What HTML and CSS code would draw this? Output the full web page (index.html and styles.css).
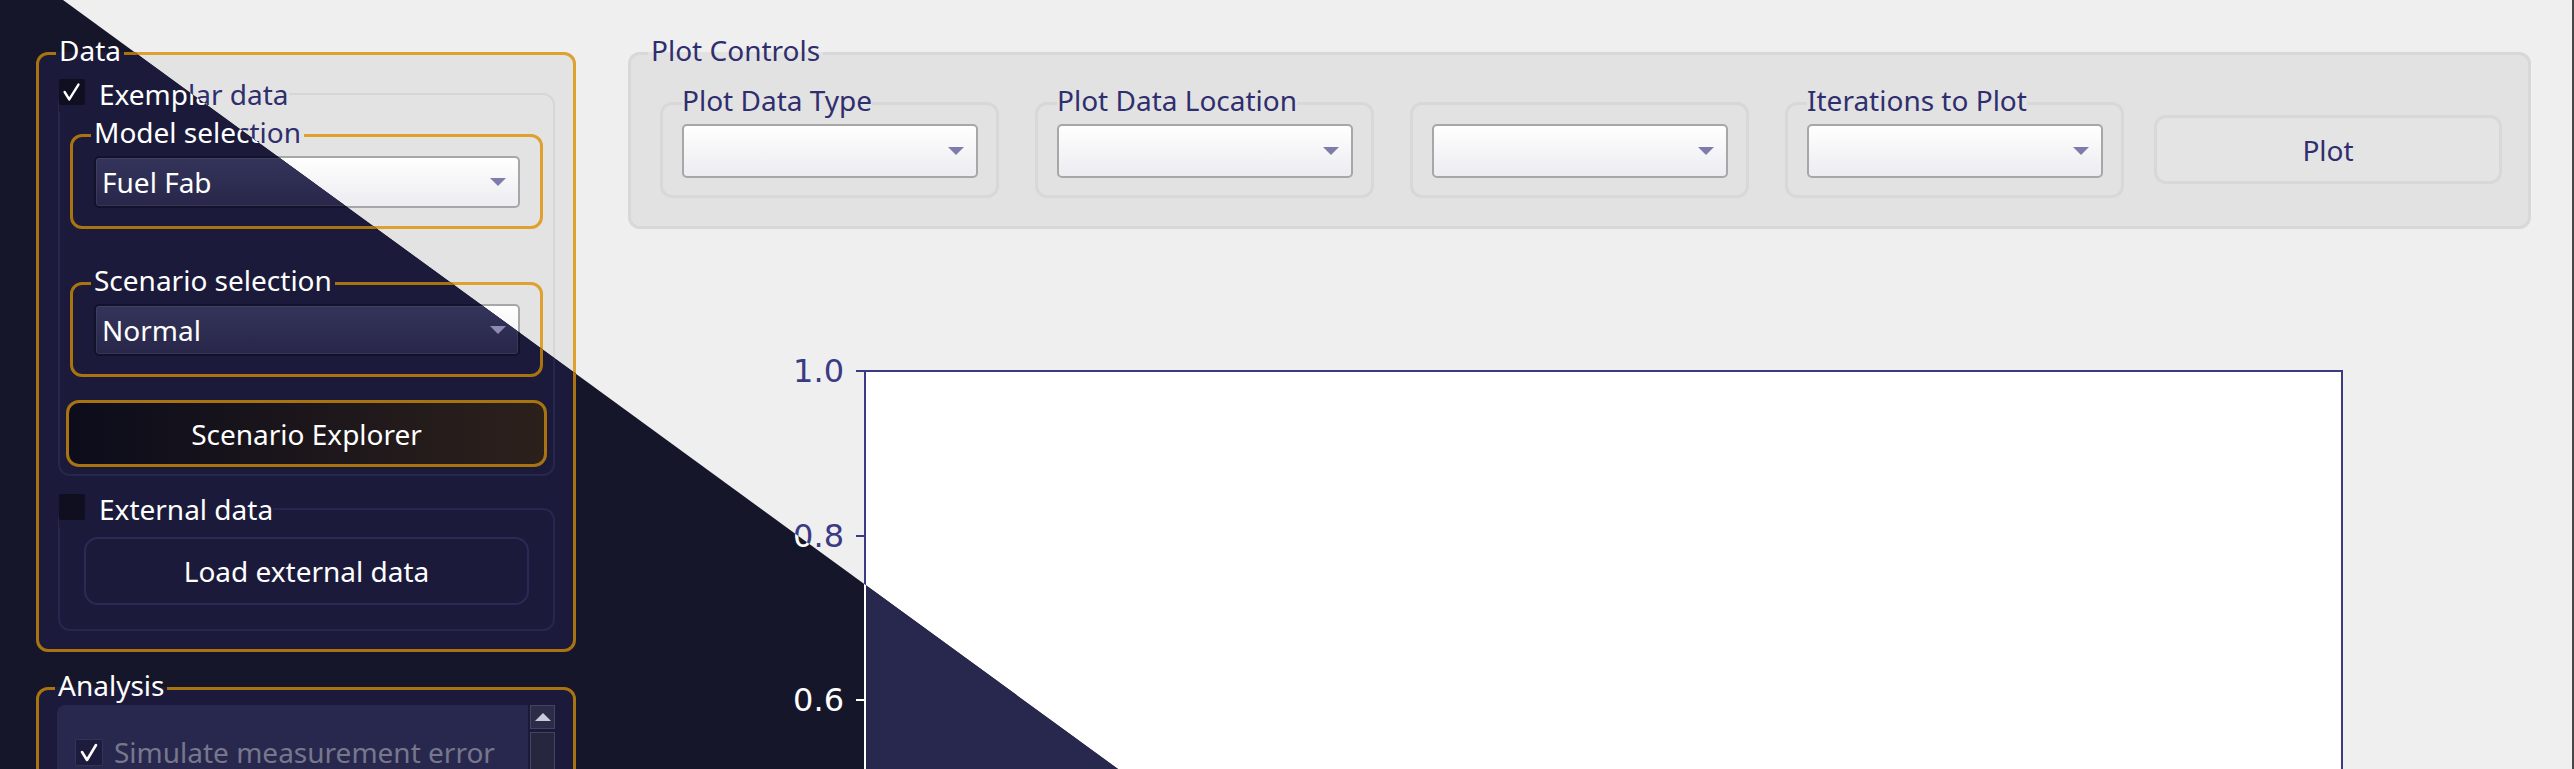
FILE: index.html
```html
<!DOCTYPE html>
<html lang="en">
<head>
<meta charset="utf-8">
<title>Plot viewer</title>
<link rel="stylesheet" href="styles.css">
</head>
<body>
<div class="screen">
  <div class="app theme-light">
    <aside class="sidebar">
      <fieldset class="group orange data-group">
        <legend class="title">Data</legend>
        <fieldset class="subgroup exemplar">
          <legend class="check-title"><span class="checkbox"><svg viewBox="0 0 26 26" class="check"><polyline points="5,13 10,21 20,5"/></svg></span><span>Exemplar data</span></legend>
          <fieldset class="group orange select-group">
            <legend class="title">Model selection</legend>
            <div class="combo"><span class="combo-text">Fuel Fab</span><span class="arrow"></span></div>
          </fieldset>
          <fieldset class="group orange select-group scenario">
            <legend class="title">Scenario selection</legend>
            <div class="combo"><span class="combo-text">Normal</span><span class="arrow"></span></div>
          </fieldset>
          <button class="explorer-btn">Scenario Explorer</button>
        </fieldset>
        <fieldset class="subgroup external">
          <legend class="check-title"><span class="checkbox"></span><span>External data</span></legend>
          <button class="load-btn">Load external data</button>
        </fieldset>
      </fieldset>
      <fieldset class="group orange analysis-group">
        <legend class="title">Analysis</legend>
        <div class="list-wrap">
          <div class="list">
            <div class="list-item"><span class="checkbox small"><svg viewBox="0 0 26 26" class="check"><polyline points="6,13 11,21 20,6"/></svg></span><span class="disabled-text">Simulate measurement error</span></div>
          </div>
          <div class="scrollbar"><div class="scroll-up"><span class="up-arrow"></span></div><div class="scroll-track"></div></div>
        </div>
      </fieldset>
    </aside>
    <main class="main">
      <fieldset class="group plot-controls">
        <legend class="title">Plot Controls</legend>
        <div class="controls-row">
          <fieldset class="ctl-box"><legend class="title plain">Plot Data Type</legend><div class="combo tall"><span class="arrow"></span></div></fieldset>
          <fieldset class="ctl-box"><legend class="title plain">Plot Data Location</legend><div class="combo tall"><span class="arrow"></span></div></fieldset>
          <fieldset class="ctl-box"><legend class="empty"></legend><div class="combo tall"><span class="arrow"></span></div></fieldset>
          <fieldset class="ctl-box"><legend class="title plain">Iterations to Plot</legend><div class="combo tall"><span class="arrow"></span></div></fieldset>
          <button class="plot-btn">Plot</button>
        </div>
      </fieldset>
      <div class="figure">
        <div class="yaxis">
          <div class="tick"><span class="tick-label">1.0</span><span class="tick-mark"></span></div>
          <div class="tick"><span class="tick-label">0.8</span><span class="tick-mark"></span></div>
          <div class="tick"><span class="tick-label">0.6</span><span class="tick-mark"></span></div>
        </div>
        <div class="axes"></div>
      </div>
    </main>
  </div>

  <div class="app theme-dark" aria-hidden="true">
    <aside class="sidebar">
      <fieldset class="group orange data-group">
        <legend class="title">Data</legend>
        <fieldset class="subgroup exemplar">
          <legend class="check-title"><span class="checkbox"><svg viewBox="0 0 26 26" class="check"><polyline points="5,13 10,21 20,5"/></svg></span><span>Exemplar data</span></legend>
          <fieldset class="group orange select-group">
            <legend class="title">Model selection</legend>
            <div class="combo"><span class="combo-text">Fuel Fab</span><span class="arrow"></span></div>
          </fieldset>
          <fieldset class="group orange select-group scenario">
            <legend class="title">Scenario selection</legend>
            <div class="combo"><span class="combo-text">Normal</span><span class="arrow"></span></div>
          </fieldset>
          <button class="explorer-btn">Scenario Explorer</button>
        </fieldset>
        <fieldset class="subgroup external">
          <legend class="check-title"><span class="checkbox"></span><span>External data</span></legend>
          <button class="load-btn">Load external data</button>
        </fieldset>
      </fieldset>
      <fieldset class="group orange analysis-group">
        <legend class="title">Analysis</legend>
        <div class="list-wrap">
          <div class="list">
            <div class="list-item"><span class="checkbox small"><svg viewBox="0 0 26 26" class="check"><polyline points="6,13 11,21 20,6"/></svg></span><span class="disabled-text">Simulate measurement error</span></div>
          </div>
          <div class="scrollbar"><div class="scroll-up"><span class="up-arrow"></span></div><div class="scroll-track"></div></div>
        </div>
      </fieldset>
    </aside>
    <main class="main">
      <fieldset class="group plot-controls">
        <legend class="title">Plot Controls</legend>
        <div class="controls-row">
          <fieldset class="ctl-box"><legend class="title plain">Plot Data Type</legend><div class="combo tall"><span class="arrow"></span></div></fieldset>
          <fieldset class="ctl-box"><legend class="title plain">Plot Data Location</legend><div class="combo tall"><span class="arrow"></span></div></fieldset>
          <fieldset class="ctl-box"><legend class="empty"></legend><div class="combo tall"><span class="arrow"></span></div></fieldset>
          <fieldset class="ctl-box"><legend class="title plain">Iterations to Plot</legend><div class="combo tall"><span class="arrow"></span></div></fieldset>
          <button class="plot-btn">Plot</button>
        </div>
      </fieldset>
      <div class="figure">
        <div class="yaxis">
          <div class="tick"><span class="tick-label">1.0</span><span class="tick-mark"></span></div>
          <div class="tick"><span class="tick-label">0.8</span><span class="tick-mark"></span></div>
          <div class="tick"><span class="tick-label">0.6</span><span class="tick-mark"></span></div>
        </div>
        <div class="axes"></div>
      </div>
    </main>
  </div>
</div>
</body>
</html>
```
FILE: styles.css
```css
html, body {
  margin: 0;
  padding: 0;
  overflow: hidden;
  background: #efefef;
}

.screen {
  position: relative;
  width: 2574px;
  height: 769px;
  overflow: hidden;
  font-family: "Noto Sans", "Open Sans", sans-serif;
  font-size: 28px;
}

.theme-light {
  --bg: #efefef;
  --group-bg: #e3e3e3;
  --text: #2f2e6e;
  --orange: #dea12f;
  --sub-border: #d6d6d6;
  --combo-top: #ffffff;
  --combo-bot: #ececf1;
  --combo-border: #a7a7a7;
  --combo-shadow: rgba(0, 0, 0, 0);
  --arrow: #7e7cab;
  --axes-bg: #ffffff;
  --axes-line: #3b3a85;
  --tick-text: #3b3a85;
  --plot-group-bg: #e2e2e2;
  --plot-border: #d8d8d8;
  --plot-btn-bg: #e4e4e4;
  --cb-bg: #ffffff;
  --cb-border: #a0a0a0;
  --check: #2f2e6e;
  --explorer-a: #f4f4f4;
  --explorer-b: #efe6da;
  --load-border: #d4d4d4;
  --list-bg: #ffffff;
  --disabled: #9a9a9a;
  --scroll-btn: #e6e6e6;
  --scroll-border: #c4c4c4;
  --scroll-arrow: #777777;
  --track: #eaeaea;
}

.theme-dark {
  --bg: #16162b;
  --group-bg: #1b1a3a;
  --text: #ffffff;
  --orange: #a9740f;
  --sub-border: #27264f;
  --combo-top: #34335a;
  --combo-bot: #28274a;
  --combo-border: #12122a;
  --combo-shadow: rgba(255, 255, 255, 0.07);
  --arrow: #8d8bb3;
  --axes-bg: #28284f;
  --axes-line: #ffffff;
  --tick-text: #ffffff;
  --plot-group-bg: #1b1a3a;
  --plot-border: #27264f;
  --plot-btn-bg: #1b1a3a;
  --cb-bg: #0f0f20;
  --cb-border: #0f0f20;
  --check: #ffffff;
  --explorer-a: #0c0c1b;
  --explorer-b: #2c201b;
  --load-border: #2b2a56;
  --list-bg: #28284f;
  --disabled: #77778c;
  --scroll-btn: #2c2c49;
  --scroll-border: #45445f;
  --scroll-arrow: #c9c9d9;
  --track: #27263f;
}

.app {
  display: flex;
  gap: 52px;
  box-sizing: border-box;
  width: 2574px;
  height: 769px;
  padding: 32px 41px 0 36px;
  background: var(--bg);
  color: var(--text);
  border-right: 2px solid #474747;
}

.theme-dark {
  position: absolute;
  top: 0;
  left: 0;
  clip-path: polygon(0 0, 63px 0, 1118px 769px, 0 769px);
}

fieldset {
  margin: 0;
  min-width: 0;
}

legend.title {
  font-size: 28px;
  line-height: 36px;
  padding: 0 3px 6px;
  margin-left: -3px;
  color: var(--text);
}

legend.plain {
  margin-left: 0;
  padding: 0 0 6px;
}

legend.empty {
  width: 0;
  height: 42px;
  padding: 0;
}

.check-title {
  display: flex;
  align-items: center;
  gap: 14px;
  padding: 0;
  font-size: 28px;
  line-height: 36px;
}

.checkbox {
  width: 26px;
  height: 26px;
  box-sizing: border-box;
  border-radius: 2px;
  background: var(--cb-bg);
  border: 1px solid var(--cb-border);
  display: flex;
  align-items: center;
  justify-content: center;
  flex: none;
}

.check-title .checkbox {
  margin-bottom: 4px;
}

.check {
  width: 26px;
  height: 26px;
  fill: none;
  stroke: var(--check);
  stroke-width: 2.6;
  stroke-linecap: round;
  stroke-linejoin: round;
}

/* ---------- sidebar ---------- */
.sidebar {
  width: 540px;
  flex: none;
  display: flex;
  flex-direction: column;
}

.group {
  border: 3px solid var(--orange);
  border-radius: 12px;
}

.data-group {
  background: var(--group-bg);
  padding: 2px 18px 18px 19px;
}

.data-group > legend.title,
.analysis-group > legend.title {
  margin-left: -2px;
}

.subgroup {
  border: 2px solid var(--sub-border);
  border-radius: 12px;
}

.exemplar {
  padding: 2px 10px 7px 10px;
}

.exemplar > .check-title {
  margin-left: -11px;
}

.select-group {
  padding: 0 20px 18px 21px;
}

.scenario {
  margin-top: 33px;
}

.combo {
  display: flex;
  align-items: center;
  justify-content: space-between;
  box-sizing: border-box;
  height: 52px;
  padding: 0 12px 0 6px;
  border: 2px solid var(--combo-border);
  border-radius: 5px;
  background: linear-gradient(var(--combo-top), var(--combo-bot));
  box-shadow: inset 0 0 0 1px var(--combo-shadow);
  color: var(--text);
  font-size: 28px;
}

.combo.tall {
  height: 54px;
  justify-content: flex-end;
}

.arrow {
  width: 0;
  height: 0;
  border-left: 8px solid transparent;
  border-right: 8px solid transparent;
  border-top: 8px solid var(--arrow);
}

.explorer-btn {
  display: block;
  box-sizing: border-box;
  width: calc(100% + 8px);
  height: 67px;
  margin: 23px -4px 0 -4px;
  border: 3px solid var(--orange);
  border-radius: 13px;
  background: linear-gradient(90deg, var(--explorer-a), var(--explorer-b));
  color: var(--text);
  font-family: inherit;
  font-size: 28px;
  padding: 0;
}

.external {
  margin-top: 15px;
  padding: 10px 24px 24px 24px;
}

.external > .check-title {
  margin-left: -25px;
}

.load-btn {
  display: block;
  box-sizing: border-box;
  width: 100%;
  height: 68px;
  border: 2px solid var(--load-border);
  border-radius: 14px;
  background: transparent;
  color: var(--text);
  font-family: inherit;
  font-size: 28px;
  padding: 0;
}

.analysis-group {
  margin-top: 15px;
  background: var(--group-bg);
  padding: 0 18px 0 18px;
  height: 200px;
}

.list-wrap {
  display: flex;
  gap: 2px;
  margin-top: -4px;
  height: 180px;
}

.list {
  flex: 1;
  background: var(--list-bg);
  border-radius: 8px 0 0 0;
  padding-top: 29px;
}

.list-item {
  display: flex;
  align-items: center;
  gap: 11px;
  padding-left: 18px;
}

.checkbox.small {
  width: 28px;
  height: 27px;
  background: #1d1c3c;
  border: 1px solid #33325a;
}

.theme-light .checkbox.small {
  background: #ffffff;
  border-color: #a0a0a0;
}

.disabled-text {
  color: var(--disabled);
  line-height: 36px;
}

.scrollbar {
  width: 25px;
  display: flex;
  flex-direction: column;
  gap: 3px;
}

.scroll-up {
  height: 24px;
  box-sizing: border-box;
  background: var(--scroll-btn);
  border: 1px solid var(--scroll-border);
  display: flex;
  align-items: center;
  justify-content: center;
}

.up-arrow {
  width: 0;
  height: 0;
  border-left: 8px solid transparent;
  border-right: 8px solid transparent;
  border-bottom: 8px solid var(--scroll-arrow);
}

.scroll-track {
  flex: 1;
  background: var(--track);
  border: 1px solid var(--scroll-border);
}

/* ---------- main ---------- */
.main {
  flex: 1;
  min-width: 0;
  display: flex;
  flex-direction: column;
}

.plot-controls {
  border-color: var(--plot-border);
  background: var(--plot-group-bg);
  padding: 8px 26px 28px 29px;
}

.plot-controls > legend.title {
  margin-left: -12px;
}

.controls-row {
  display: flex;
  align-items: flex-end;
  gap: 36px;
}

.ctl-box {
  width: 339px;
  box-sizing: border-box;
  flex: none;
  border: 3px solid var(--plot-border);
  border-radius: 12px;
  padding: 0 18px 17px 19px;
}

.plot-btn {
  flex: 1;
  height: 69px;
  margin: 0 0 14px -6px;
  border: 3px solid var(--plot-border);
  border-radius: 12px;
  background: var(--plot-btn-bg);
  color: var(--text);
  font-family: inherit;
  font-size: 28px;
  padding: 0;
}

.figure {
  display: flex;
  padding-top: 141px;
}

.yaxis {
  width: 236px;
  flex: none;
  display: flex;
  flex-direction: column;
  gap: 164.5px;
  padding-top: 1px;
}

.tick {
  height: 0;
  display: flex;
  align-items: center;
  justify-content: flex-end;
}

.tick-label {
  font-family: "DejaVu Sans", sans-serif;
  font-size: 32px;
  line-height: 1;
  color: var(--tick-text);
  margin-right: 12px;
}

.tick-mark {
  width: 8px;
  height: 2px;
  background: var(--axes-line);
}

.axes {
  width: 1479px;
  height: 600px;
  box-sizing: border-box;
  flex: none;
  background: var(--axes-bg);
  border: 2px solid var(--axes-line);
}
```
